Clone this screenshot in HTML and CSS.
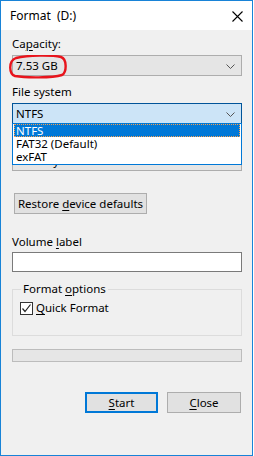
FILE: index.html
```html
<!DOCTYPE html>
<html lang="en">
<head>
    <meta charset="UTF-8">
    <title>Format (D:)</title>
    <link rel="stylesheet" href="styles.css">
</head>
<body>
    <div class="window">
        <div class="titlebar">
            <span class="title">Format&nbsp;&nbsp;(D:)</span>
            <svg class="close-x" width="11" height="11" viewBox="0 0 11 11">
                <path d="M0.5 0.5 L10.5 10.5 M10.5 0.5 L0.5 10.5" stroke="#000" stroke-width="1.1"/>
            </svg>
        </div>

        <div class="content">
            <div class="label">Ca<u>p</u>acity:</div>
            <div class="combo">
                <span>7.53 GB</span>
                <svg class="chevron" width="9" height="5" viewBox="0 0 9 5"><path d="M0.5 0.5 L4.5 4.5 L8.5 0.5" fill="none" stroke="#555"/></svg>
                <!-- red marker drawn over the capacity value -->
                <svg class="marker" width="60" height="24" viewBox="0 0 60 24">
                    <path d="M8 3 C20 0 44 0 53 2 C59 4 59 17 54 20 C44 23 18 23 7 21 C1 19 0 6 8 3 Z" fill="none" stroke="#e8141c" stroke-width="2.4"/>
                </svg>
            </div>

            <div class="label gap">File system</div>
            <div class="combo active">
                <span>NTFS</span>
                <svg class="chevron" width="9" height="5" viewBox="0 0 9 5"><path d="M0.5 0.5 L4.5 4.5 L8.5 0.5" fill="none" stroke="#555"/></svg>
                <ul class="droplist">
                    <li class="selected">NTFS</li>
                    <li>FAT32 (Default)</li>
                    <li>exFAT</li>
                </ul>
            </div>

            <!-- allocation unit size row, hidden behind the open list -->
            <div class="label gap2"></div>
            <div class="combo"><span class="hidden-val">4096 bytes</span></div>

            <button class="btn restore">Restore <u>d</u>evice defaults</button>

            <div class="label vol">Volume <u>l</u>abel</div>
            <div class="textbox"></div>

            <fieldset class="options">
                <legend>Format <u>o</u>ptions</legend>
                <div class="check-row">
                    <span class="checkbox">
                        <svg width="11" height="11" viewBox="0 0 11 11"><path d="M1.5 5.5 L4 8.5 L9.5 1.5" fill="none" stroke="#222" stroke-width="1.2"/></svg>
                    </span>
                    <span><u>Q</u>uick Format</span>
                </div>
            </fieldset>

            <div class="progress"></div>

            <div class="actions">
                <button class="btn start"><u>S</u>tart</button>
                <button class="btn close"><u>C</u>lose</button>
            </div>
        </div>
    </div>
</body>
</html>
```

FILE: styles.css
```css
body {
    margin: 0;
    background: #fff;
    font-family: "Noto Sans", "Open Sans", sans-serif;
    font-size: 11.5px;
    color: #000;
}
u {
    text-decoration-thickness: 1px;
    text-underline-offset: 2px;
}
.window {
    width: 251px;
    height: 454px;
    border: 1px solid #1883d7;
    background: #f0f0f0;
}
.titlebar {
    height: 29px;
    background: #fff;
    display: flex;
    align-items: center;
    justify-content: space-between;
    padding: 0 9px 0 9px;
}
.title {
    font-size: 12px;
    line-height: 16px;
}
.close-x {
    margin-top: 1px;
}
.content {
    padding: 6px 10px 0 11px;
}
.label {
    line-height: 16px;
    height: 16px;
    margin-bottom: 3px;
}
.label.gap {
    margin-top: 8px;
}
.label.gap2 {
    margin-top: 7px;
}
.label.vol {
    margin-top: 20px;
    margin-bottom: 2px;
}
.combo {
    position: relative;
    height: 19px;
    border: 1px solid #adadad;
    background: #e5e5e5;
    display: flex;
    align-items: center;
    justify-content: space-between;
    padding: 0 6px 0 3px;
    line-height: 16px;
}
.combo.active {
    background: #cce4f7;
    border-color: #005499;
}
.hidden-val {
    padding-left: 1px;
}
.chevron {
    margin-top: 1px;
}
.marker {
    position: absolute;
    left: -5px;
    top: -1px;
}
.droplist {
    position: absolute;
    left: -1px;
    right: -1px;
    top: 19px;
    margin: 0;
    padding: 0 1px 1px 1px;
    list-style: none;
    background: #fff;
    border: 1px solid #0078d7;
    z-index: 2;
}
.droplist li {
    height: 13px;
    line-height: 13px;
    padding-left: 2px;
}
.droplist li.selected {
    background: #0078d7;
    color: #fff;
    outline: 1px dotted #f5a050;
    outline-offset: -1px;
}
.btn {
    font-family: inherit;
    font-size: 11.5px;
    color: #000;
    background: #e1e1e1;
    border: 1px solid #adadad;
    padding: 0;
    height: 21px;
    line-height: 17px;
}
.restore {
    display: block;
    margin: 22px 0 0 2px;
    width: 133px;
}
.textbox {
    height: 18px;
    border: 1px solid #7a7a7a;
    background: #fff;
}
.options {
    margin: 9px 0 0 0;
    padding: 3px 0 0 7px;
    height: 50px;
    border: 1px solid #dcdcdc;
    min-width: 0;
}
.options legend {
    padding: 0 2px;
    margin-left: 1px;
    line-height: 16px;
}
.check-row {
    display: flex;
    align-items: center;
    gap: 3px;
    line-height: 16px;
}
.checkbox {
    width: 11px;
    height: 11px;
    border: 1px solid #333;
    background: #fff;
    display: flex;
}
.progress {
    margin-top: 13px;
    height: 11px;
    border: 1px solid #bcbcbc;
    background: #e6e6e6;
}
.actions {
    display: flex;
    justify-content: flex-end;
    gap: 9px;
    margin: 30px 1px 0 0;
}
.start {
    width: 73px;
    border: 2px solid #0078d7;
}
.close {
    width: 74px;
}
```
